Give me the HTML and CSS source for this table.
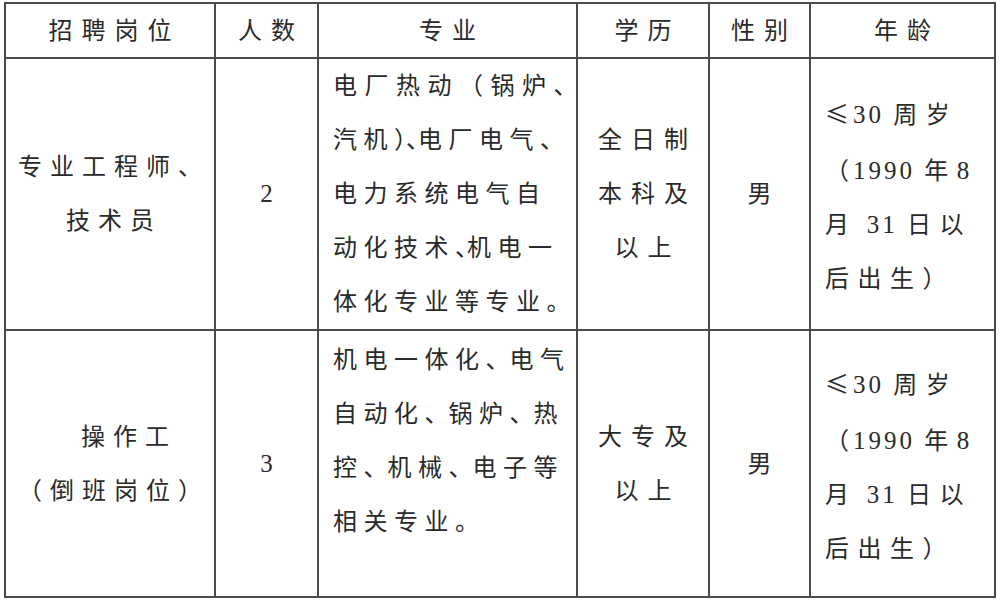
FILE: index.html
```html
<!DOCTYPE html>
<html lang="zh-CN">
<head>
<meta charset="utf-8">
<title>招聘岗位</title>
<link rel="stylesheet" href="styles.css">
</head>
<body>
<table class="jobs">
  <colgroup>
    <col class="c-pos">
    <col class="c-cnt">
    <col class="c-major">
    <col class="c-edu">
    <col class="c-sex">
    <col class="c-age">
  </colgroup>
  <thead>
    <tr class="head">
      <th>招聘岗位</th>
      <th>人数</th>
      <th>专业</th>
      <th>学历</th>
      <th>性别</th>
      <th>年龄</th>
    </tr>
  </thead>
  <tbody>
    <tr class="r1">
      <td class="pos">专业工程师、<br>技术员</td>
      <td class="cnt">2</td>
      <td class="major"><span class="wide">电厂热动（锅炉、</span><br>汽机<span class="half">）、</span>电厂电气、<br>电力系统电气自<br>动化技术<span class="half">、</span>机电一<br>体化专业等专业。</td>
      <td class="edu">全日制<br>本科及<br>以上</td>
      <td class="sex">男</td>
      <td class="age"><span class="cjk">≤</span><span class="num">30 </span>周岁<br><span class="cjk">（</span><span class="num">1990 </span>年<span class="num">8</span><br>月<span class="num"> 31 </span>日以<br>后出生）</td>
    </tr>
    <tr class="r2">
      <td class="pos"><span class="indent">操作工</span><br>（倒班岗位）</td>
      <td class="cnt">3</td>
      <td class="major top2">机电一体化<span class="p">、</span>电气<br>自动化<span class="p">、</span>锅炉<span class="p">、</span>热<br>控<span class="p">、</span>机械<span class="p">、</span>电子等<br>相关专业。</td>
      <td class="edu">大专及<br>以上</td>
      <td class="sex">男</td>
      <td class="age"><span class="cjk">≤</span><span class="num">30 </span>周岁<br><span class="cjk">（</span><span class="num">1990 </span>年<span class="num">8</span><br>月<span class="num"> 31 </span>日以<br>后出生）</td>
    </tr>
  </tbody>
</table>
</body>
</html>
```

FILE: styles.css
```css
html, body {
  margin: 0;
  padding: 0;
  background: #ffffff;
}

body {
  font-family: "Liberation Serif", "Noto Sans CJK SC", serif;
  color: #2a2a2a;
  font-size: 24px;
}

.jobs {
  border-collapse: collapse;
  table-layout: fixed;
  width: 992px;
  margin: 2px 0 0 4px;
}

.c-pos { width: 210px; }
.c-cnt { width: 103px; }
.c-major { width: 259px; }
.c-edu { width: 132px; }
.c-sex { width: 101px; }
.c-age { width: 185px; }

.jobs th,
.jobs td {
  border: 2px solid #4a4a4a;
  padding: 0;
  text-align: center;
  vertical-align: middle;
  line-height: 54px;
  white-space: nowrap;
  font-weight: normal;
}

.head { height: 55px; }
.head th {
  line-height: 30px;
  letter-spacing: 9px;
  padding-left: 9px;
}

.r1 { height: 270px; }
.r2 { height: 267px; }

.pos {
  letter-spacing: 8px;
  padding-left: 8px !important;
}

.indent {
  padding-left: 30px;
}

.cnt {
  font-size: 25px;
  letter-spacing: 0;
}

.major {
  text-align: left !important;
  vertical-align: top !important;
  padding-left: 14px !important;
  letter-spacing: 6.5px;
}

.wide {
  letter-spacing: 7.5px;
}

.top2 {
  padding-top: 2px !important;
}

.half {
  font-feature-settings: "halt";
  letter-spacing: 0;
}

.p {
  letter-spacing: 0;
}

.edu {
  letter-spacing: 9px;
  padding-left: 9px !important;
}

.age {
  text-align: left !important;
  padding-left: 14px !important;
  padding-top: 4px !important;
  letter-spacing: 8.5px;
}

.cjk {
  font-family: "Noto Sans CJK SC", sans-serif;
  letter-spacing: 4px;
}

.num {
  font-size: 25px;
  letter-spacing: 3px;
}
```
